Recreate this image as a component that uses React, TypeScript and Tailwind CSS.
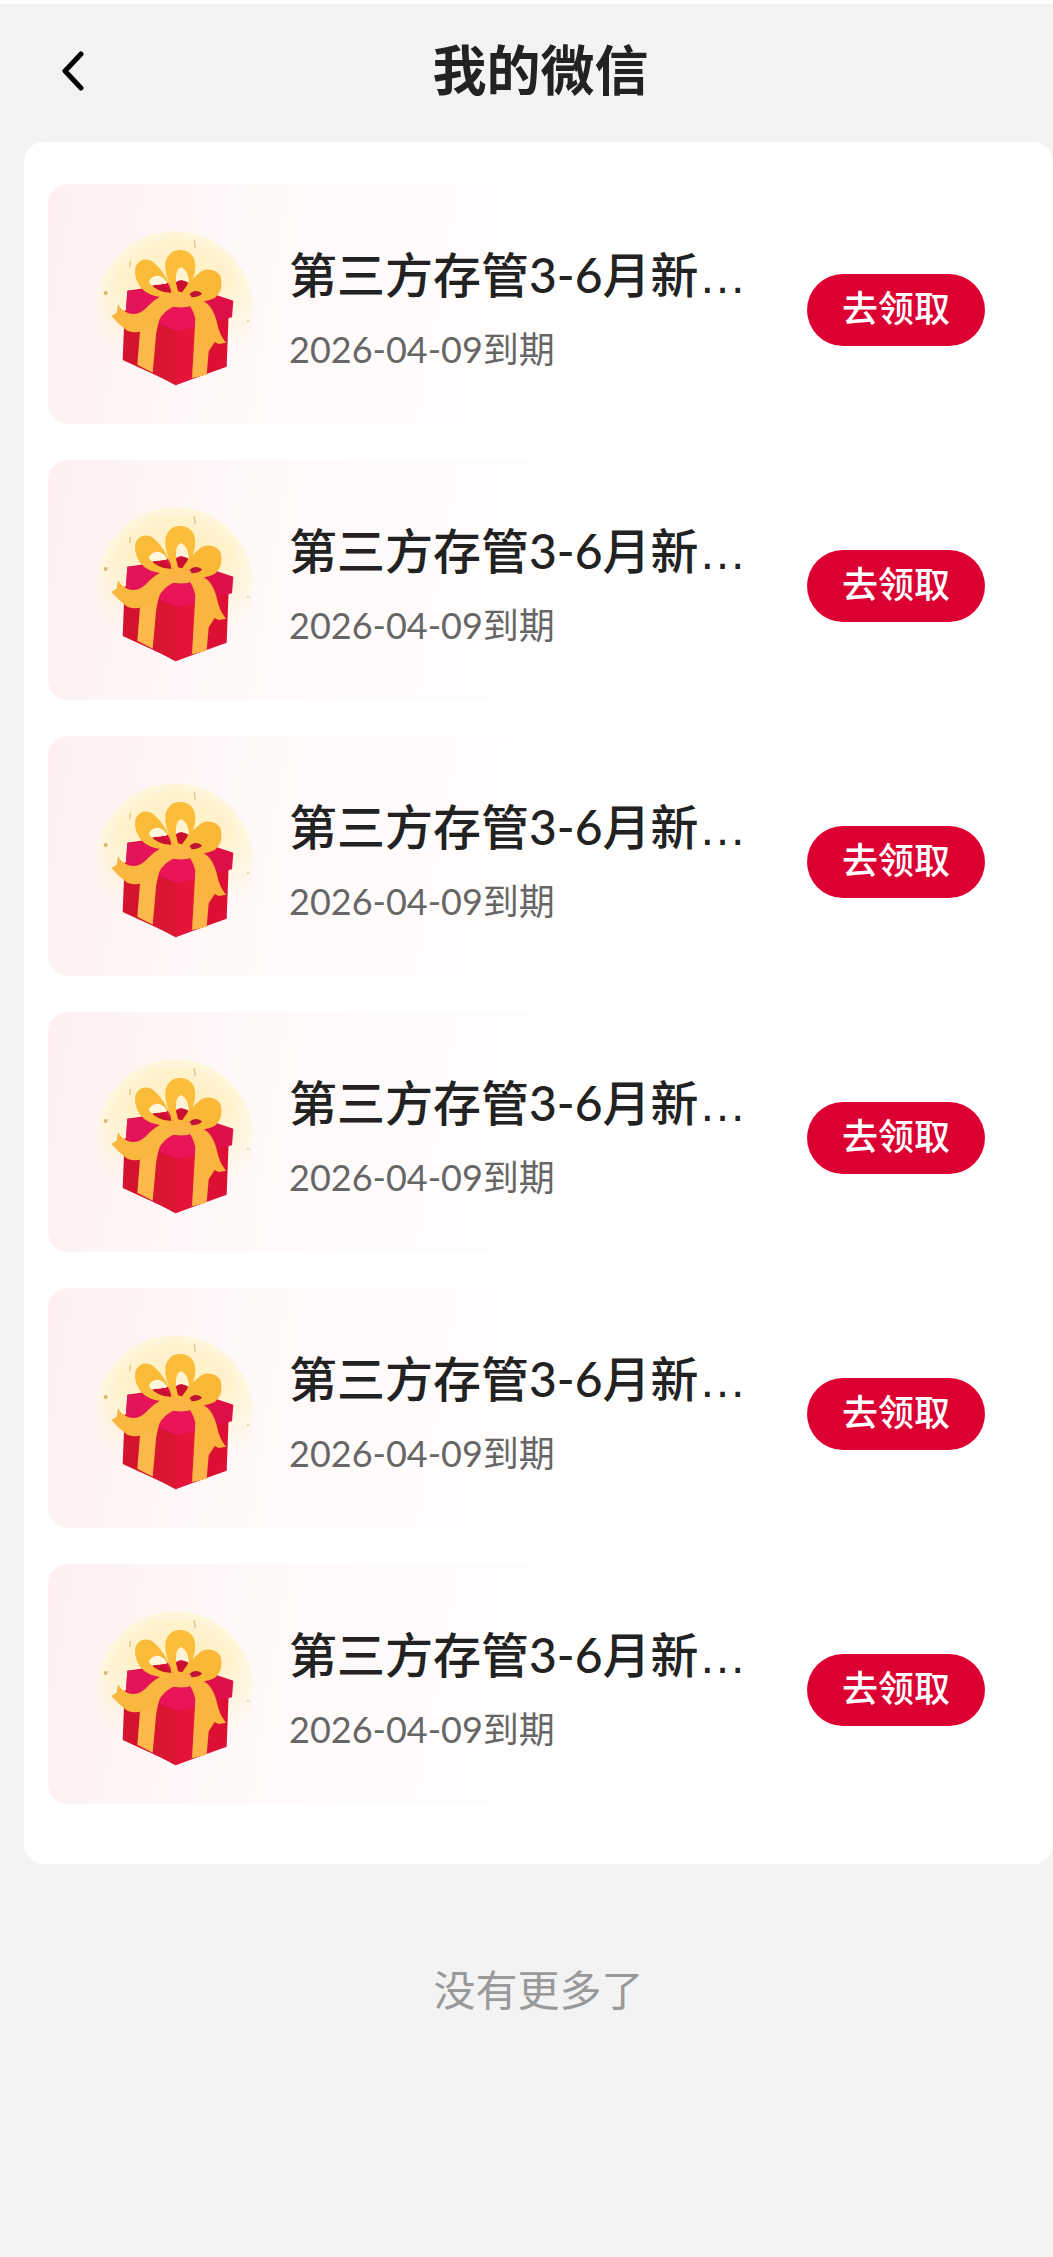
import { useId } from "react"

const rewards = [1, 2, 3, 4, 5, 6].map(id => ({
  id,
  title: "第三方存管3-6月新",
  expire: "2026-04-09到期",
}))

function BackIcon() {
  return (
    <svg className="w-6 h-10" viewBox="0 0 24 40" fill="none" aria-hidden="true">
      <path d="M21 3 L5 20 L21 37" stroke="#000" strokeWidth="5" strokeLinecap="round" strokeLinejoin="round" />
    </svg>
  )
}

function GiftIcon() {
  const id = useId()
  return (
    <svg className="w-40 h-40 shrink-0" viewBox="45 60 480 480" aria-hidden="true">
      <defs>
        <radialGradient id={`${id}glow`} cx="285" cy="290" r="236" gradientUnits="userSpaceOnUse">
          <stop offset="0" stopColor="#fff0b8" />
          <stop offset="0.8" stopColor="#fff2cc" />
          <stop offset="1" stopColor="#fff7e2" />
        </radialGradient>
        <linearGradient id={`${id}fade`} x1="0" y1="62" x2="0" y2="480" gradientUnits="userSpaceOnUse">
          <stop offset="0.35" stopColor="#fff" />
          <stop offset="0.9" stopColor="#fff" stopOpacity="0" />
        </linearGradient>
        <mask id={`${id}mask`}>
          <rect x="45" y="60" width="480" height="480" fill={`url(#${id}fade)`} />
        </mask>
      </defs>
      <circle cx="285" cy="298" r="234" fill={`url(#${id}glow)`} mask={`url(#${id}mask)`} />

      {/* confetti */}
      <path d="M343 92 L345 112 M151 154 L150 170" stroke="#d9c48a" strokeWidth="4" strokeLinecap="round" />
      <circle cx="77" cy="249" r="6" fill="#d6b96c" />
      <circle cx="504" cy="333" r="4" fill="#eddca6" />

      {/* box */}
      <path d="M134 300 L290 355 L290 524 L128 450 Z" fill="#d4142f" />
      <path d="M286 350 L446 310 L440 470 L286 526 Z" fill="#dc1035" />
      <path d="M228 340 L286 360 L286 526 L220 490 Z" fill="#d91630" />
      <path d="M286 358 L350 345 L340 505 L286 526 Z" fill="#e51539" />
      <path d="M142 242 L212 232 L300 208 L400 252 L460 272 L456 322 L352 346 L290 362 L228 344 L138 308 Z" fill="#dd1048" />
      <path d="M232 335 L270 292 L330 292 L354 330 L352 350 L290 364 Z" fill="#ea1458" />
      <path d="M142 242 L205 236 L232 262 L196 306 L152 314 L138 296 Z" fill="#e31457" />
      <path d="M208 230 Q250 212 276 248 L240 252 Z M288 220 Q308 204 330 222 L314 250 L292 248 Z" fill="#c8102f" />

      {/* ribbon down the front faces */}
      <path d="M182 340 L238 330 Q228 360 226 400 L218 488 L172 464 Z" fill="#fdb84c" />
      <path d="M346 330 L394 330 L380 494 L336 505 Z" fill="#fdb548" />

      {/* ribbon tails */}
      <path d="M272 252 Q238 254 208 284 Q176 322 142 308 Q124 302 114 282 L110 308 L94 318 Q116 344 142 362 Q184 378 232 340 Q250 300 290 286 Z" fill="#fab73f" />
      <path d="M318 262 L366 272 Q398 282 412 342 Q418 374 438 398 L416 402 L404 396 L386 424 L350 390 Q352 310 326 284 Z" fill="#fbb53f" />

      {/* bow */}
      <path fillRule="evenodd" d="M282 252 Q252 178 214 152 Q180 140 166 172 Q160 216 192 242 Q222 266 286 262 Z M206 216 Q226 184 254 208 Q272 226 274 248 Q234 250 206 216 Z" fill="#fabc38" />
      <path fillRule="evenodd" d="M284 256 Q252 196 256 158 Q266 118 304 120 Q342 124 346 164 Q348 206 310 258 Z M288 218 Q286 178 304 172 Q326 184 326 216 L310 248 L294 244 Z" fill="#fbbd3a" />
      <path d="M296 262 Q330 208 366 182 Q404 170 422 200 Q432 240 404 264 Q376 280 304 276 Z" fill="#f9b936" />
      <path d="M322 258 Q344 232 366 250 Q360 264 322 262 Z" fill="#c01235" />
      <path d="M206 216 Q224 184 252 206 L260 222 Q230 220 214 226 Z" fill="#fff6dc" />
      <path d="M288 212 Q286 176 304 172 Q324 184 326 216 Q306 204 288 216 Z" fill="#fff3d6" />
      <path d="M268 250 Q300 246 332 254 L342 284 Q306 300 268 286 Q254 270 268 250 Z" fill="#fcb544" />
    </svg>
  )
}

export default function App() {
  return (
    <div
      lang="zh-CN"
      className="min-h-screen overflow-x-hidden bg-[#f3f3f3] border-t-4 border-[#fcfcfc] font-['Lato','Noto_Sans_CJK_SC',sans-serif] text-[#222]"
    >
      <header className="grid grid-cols-[72px_1fr_68px] items-center h-[138px] pl-6 pb-1">
        <button type="button" aria-label="返回" className="flex h-16 items-center pl-9">
          <BackIcon />
        </button>
        <h1 className="text-center text-[54px] leading-[64px] font-bold">我的微信</h1>
      </header>

      <main className="ml-6">
        <ul className="flex flex-col gap-9 rounded-[20px] bg-white pt-[42px] pb-[60px] pl-6 pr-5">
          {rewards.map(reward => (
            <li
              key={reward.id}
              className="flex h-60 items-center rounded-[20px] bg-[linear-gradient(100deg,#ffeff0_0%,#fff8f8_18%,#fffcfb_40%,#ffffff_60%)] pt-3 pl-[47px] pr-12"
            >
              <GiftIcon />
              <div className="ml-[34px] min-w-0 flex-1">
                <h2 className="text-[48px] leading-[64px] font-medium whitespace-nowrap">
                  {reward.title}
                  <span className="font-['Liberation_Sans',sans-serif]">…</span>
                </h2>
                <p className="mt-4 mb-1 text-[36px] leading-[48px] text-[#666]">{reward.expire}</p>
              </div>
              <button
                type="button"
                className="h-[72px] w-[178px] shrink-0 rounded-full bg-[#dc0032] pb-1 text-[36px] leading-[48px] font-medium text-white"
              >
                去领取
              </button>
            </li>
          ))}
        </ul>
        <p className="mt-24 text-center text-[42px] leading-[60px] text-[#999]">没有更多了</p>
      </main>
    </div>
  )
}
